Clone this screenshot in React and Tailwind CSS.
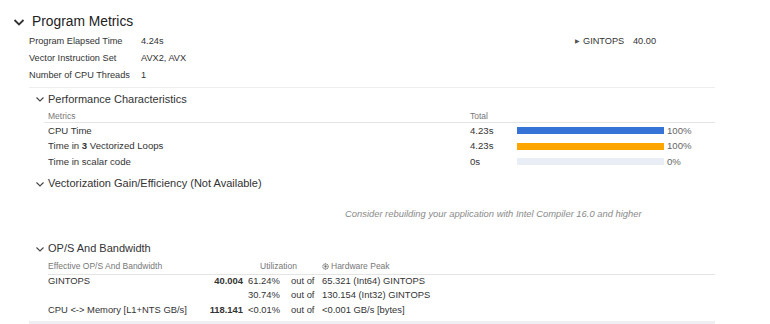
import React from "react";

function Chevron({ big }) {
  if (big) {
    return (
      <svg width="12" height="12" viewBox="0 0 12 12" className="shrink-0">
        <path d="M1.5 4 L6 8.5 L10.5 4" fill="none" stroke="#333" strokeWidth="1.8" />
      </svg>
    );
  }
  return (
    <svg width="10" height="10" viewBox="0 0 10 10" className="shrink-0">
      <path d="M1.5 3.5 L5 7 L8.5 3.5" fill="none" stroke="#444" strokeWidth="1.1" />
    </svg>
  );
}

function Section({ title }) {
  return (
    <div className="h-[22px] flex items-center pl-[6px] gap-[3px] text-[11px] text-[#333]">
      <Chevron />
      <span>{title}</span>
    </div>
  );
}

function BarRow({ label, total, pct, color }) {
  return (
    <div className="h-[15.5px] flex items-center text-[9.6px]">
      <div className="w-[426px] pl-[4px]">{label}</div>
      <div className="w-[47px]">{total}</div>
      <div className="w-[147px] h-[7px] bg-[#e9edf5]">
        <div className={`h-full ${color}`} style={{ width: pct + "%" }} />
      </div>
      <div className="pl-[3px] text-[#666]">{pct}%</div>
    </div>
  );
}

export default function App() {
  const info = [
    ["Program Elapsed Time", "4.24s"],
    ["Vector Instruction Set", "AVX2, AVX"],
    ["Number of CPU Threads", "1"],
  ];

  return (
    <div
      className="w-[770px] h-[324px] pt-[2px] bg-white overflow-hidden text-[9.2px] text-[#333]"
      style={{ fontFamily: "'Liberation Sans', Arial, sans-serif" }}
    >
      {/* header */}
      <div className="pt-[9px] h-[31px] flex items-center pl-[13px] gap-[7px]">
        <Chevron big />
        <span className="text-[13.8px] text-[#222]">Program Metrics</span>
      </div>

      <div className="ml-[29px] w-[686px]">
        <div className="flex">
          <div className="w-[546px]">
            {info.map(([k, v]) => (
              <div key={k} className="h-[17px] flex items-center">
                <span className="w-[112px]">{k}</span>
                <span>{v}</span>
              </div>
            ))}
          </div>
          <div className="h-[17px] flex items-center">
            <span className="text-[6px] text-[#555] w-[8px]">▶</span>
            <span className="w-[50px]">GINTOPS</span>
            <span>40.00</span>
          </div>
        </div>
        <div className="mt-[3px] border-t border-[#eeeeee]" />

        {/* Performance Characteristics */}
        <Section title="Performance Characteristics" />
        <div className="ml-[15px]">
          <div className="h-[13px] flex items-center border-b border-[#e4e4e4] text-[8.5px] text-[#777]">
            <div className="w-[426px] pl-[4px]">Metrics</div>
            <div>Total</div>
          </div>
          <BarRow label="CPU Time" total="4.23s" pct={100} color="bg-[#3574d6]" />
          <BarRow
            label={
              <span>
                Time in <b>3</b> Vectorized Loops
              </span>
            }
            total="4.23s"
            pct={100}
            color="bg-[#ffa500]"
          />
          <BarRow label="Time in scalar code" total="0s" pct={0} color="bg-[#e9edf5]" />
        </div>

        {/* Vectorization */}
        <div className="mt-[3px]">
          <Section title="Vectorization Gain/Efficiency (Not Available)" />
        </div>
        <div className="mt-[13px] h-[14px] flex items-center pl-[316px] text-[9.4px] italic text-[#8a8a8a]">
          Consider rebuilding your application with Intel Compiler 16.0 and higher
        </div>

        {/* OP/S */}
        <div className="mt-[16px]">
          <Section title="OP/S And Bandwidth" />
        </div>
        <div className="ml-[19px] text-[9.4px]">
          <div className="h-[15px] flex items-center border-b border-[#e4e4e4] text-[8.5px] text-[#777]">
            <div className="w-[200px]">Effective OP/S And Bandwidth</div>
            <div className="w-[61px] text-center">Utilization</div>
            <div className="pl-[13px] flex items-center gap-[2px]">
              <svg width="7" height="7" viewBox="0 0 8 8">
                <circle cx="4" cy="4" r="3" fill="none" stroke="#666" strokeWidth="1.2" strokeDasharray="1.3 0.6" />
                <circle cx="4" cy="4" r="1.3" fill="#666" />
              </svg>
              <span>Hardware Peak</span>
            </div>
          </div>
          <div className="h-[14px] flex items-center">
            <div className="w-[144px]">GINTOPS</div>
            <div className="w-[51px] text-right font-bold">40.004</div>
            <div className="w-[48px] pl-[5px]">61.24%</div>
            <div className="w-[31px]">out of</div>
            <div>65.321 (Int64) GINTOPS</div>
          </div>
          <div className="h-[14px] flex items-center">
            <div className="w-[195px]" />
            <div className="w-[48px] pl-[5px]">30.74%</div>
            <div className="w-[31px]">out of</div>
            <div>130.154 (Int32) GINTOPS</div>
          </div>
          <div className="mt-[1px] h-[14px] flex items-center">
            <div className="w-[144px]">CPU &lt;-&gt; Memory [L1+NTS GB/s]</div>
            <div className="w-[51px] text-right font-bold">118.141</div>
            <div className="w-[48px] pl-[5px]">&lt;0.01%</div>
            <div className="w-[31px]">out of</div>
            <div>&lt;0.001 GB/s [bytes]</div>
          </div>
        </div>
        <div className="mt-[3px] h-[6px] bg-[#efeff3]" />
      </div>
    </div>
  );
}
